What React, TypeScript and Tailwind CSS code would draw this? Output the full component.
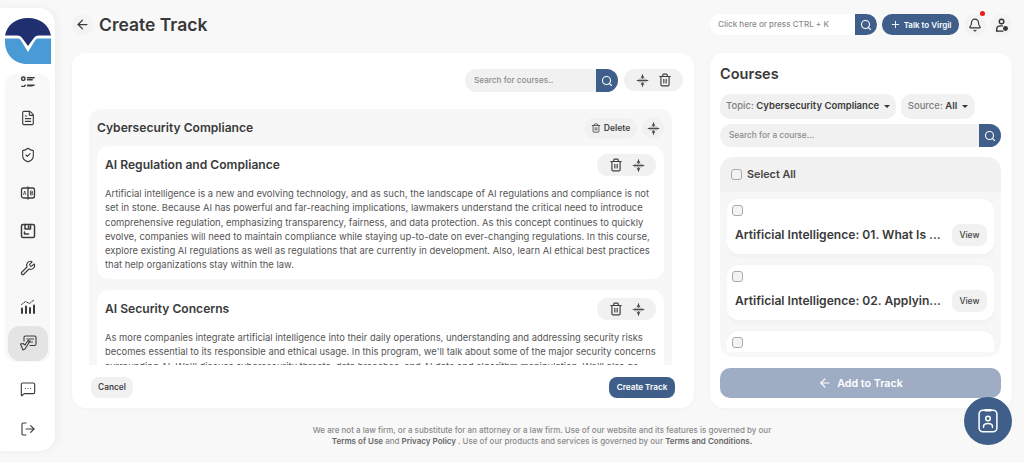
import React from "react";
import { ArrowLeft, Search, Plus, Bell, Trash2, FileText, ShieldCheck, Wrench, MessageSquareMore, LogOut } from "lucide-react";

const Move = ({ s = 13 }: { s?: number }) => (
  <svg width={s} height={s} viewBox="0 0 16 16" fill="none" stroke="#4b4b4b" strokeWidth="1.4" strokeLinecap="round" strokeLinejoin="round">
    <rect x="2" y="5.500" width="12" height="5" rx="2.500" stroke="none" fill="#bcbcbc" />
    <path d="M1.500 8h13" />
    <path d="M8 1v4M6.600 3.600 8 5l1.400-1.400M8 15v-4M6.600 12.400 8 11l1.400 1.400" />
  </svg>
);

const Caret = () => <span className="ml-[5px] w-0 h-0 border-x-[3.5px] border-x-transparent border-t-[3.5px] border-t-[#333]" />;

const Check = () => <span className="block w-[11px] h-[11px] rounded-[3px] border border-[#aaa] bg-[#f3f3f3]" />;

const Pill = ({ flip }: { flip?: boolean }) => (
  <div className="w-[59px] h-[22px] rounded-full bg-[#f1f1f1] flex items-center justify-center gap-[9px]">
    {flip ? <><Move /><Trash2 size={14} color="#3f3f3f" /></> : <><Trash2 size={14} color="#3f3f3f" /><Move /></>}
  </div>
);

const SearchBtn = () => (
  <span className="h-full w-[22px] shrink-0 bg-[#3f5f8a] rounded-r-full flex items-center justify-center"><Search size={12} color="#fff" strokeWidth={2.2} /></span>
);

const NavIcon = ({ children, active }: { children: React.ReactNode; active?: boolean }) => (
  <div className="shrink-0 h-[37.6px] flex items-center justify-center">
    {active ? <div className="w-[40px] h-[35px] rounded-[12px] bg-[#e4e4e4] flex items-center justify-center">{children}</div> : children}
  </div>
);

const I = { size: 16, color: "#3c3c3c", strokeWidth: 1.7 };

const Item = ({ title }: { title: string }) => (
  <div className="bg-white rounded-[12px] h-[55px] px-[5px] pt-[6px] shadow-[0_2px_6px_rgba(0,0,0,0.04)] shrink-0">
    <Check />
    <div className="flex items-center justify-between mt-[8px] pl-[3px] pr-[2px]">
      <span className="pt-[1px] text-[12.1px] font-semibold text-[#3a3a3a] whitespace-nowrap">{title}</span>
      <span className="w-[35px] h-[22px] rounded-[8px] bg-[#f1f1f1] text-[8.5px] font-medium text-[#444] flex items-center justify-center">View</span>
    </div>
  </div>
);

export default function App() {
  return (
    <div className="relative w-[1024px] h-[462px] overflow-hidden bg-[#f8f8f8] flex font-['Inter',sans-serif]">
      <aside className="w-[55px] my-[8px] h-[443px] shrink-0 bg-white rounded-r-[16px] shadow-[2px_0_8px_rgba(0,0,0,0.05)] flex flex-col items-center">
        <svg className="mt-[10px] shrink-0" width="46" height="46" viewBox="0 0 46 46">
          <path d="M0 17.500C2 7 11 0 23 0s21 7 23 17.500H34c-3 0-4 1-5.500 3L23 28l-5.500-7.500c-1.500-2-2.500-3-5.500-3z" fill="#1f2f6f" />
          <path d="M0 20.500h12c2 0 3 .5 4 2l7 11.500 7-11.500c1-1.500 2-2 4-2h12V46H22C9 46 0 36 0 24z" fill="#4a9ad6" />
        </svg>
        <div className="mt-[10px] w-[45px] h-[288px] bg-[#f8f8f8] rounded-[10px] overflow-hidden flex flex-col shrink-0">
          <div className="shrink-0 h-[13px] flex items-end justify-center overflow-hidden">
            <svg width="15" height="15" viewBox="0 0 16 16" fill="none" stroke="#3c3c3c" strokeWidth="1.6" strokeLinecap="round" className="shrink-0 mb-[-3px]">
              <circle cx="3.500" cy="4" r="1.800" /><path d="M8 3h7M8 5h5M8 11h7M8 13h5M2 12l1.200 1.200L5.500 11" />
            </svg>
          </div>
          <div className="mt-[12px] flex flex-col">
            <NavIcon><FileText {...I} /></NavIcon>
            <NavIcon><ShieldCheck {...I} /></NavIcon>
            <NavIcon>
              <svg width="16" height="16" viewBox="0 0 16 16" fill="none" stroke="#3c3c3c" strokeWidth="1.3" strokeLinejoin="round"><rect x="1.500" y="3" width="13" height="10" rx="2" /><path d="M8 1.500v13" /><path d="M3.500 10l1.200-4 1.200 4M10.500 6h1.200a1 1 0 0 1 0 2h-1.200V6zm0 2h1.500a1 1 0 0 1 0 2h-1.500V8z" strokeWidth="0.8" /></svg>
            </NavIcon>
            <NavIcon>
              <svg width="16" height="16" viewBox="0 0 16 16" fill="none" stroke="#3c3c3c" strokeWidth="1.5" strokeLinejoin="round" strokeLinecap="round"><rect x="1.500" y="1.500" width="13" height="13" rx="1.500" /><path d="M5 1.500V6h5.500V1.500M8.500 3v1.500M4.500 11h4M4.500 9v2" /></svg>
            </NavIcon>
            <NavIcon><Wrench {...I} /></NavIcon>
            <NavIcon>
              <svg width="16" height="16" viewBox="0 0 16 16" fill="none" stroke="#3c3c3c" strokeLinecap="round"><path d="M2 10.500V15M6 8.500V15M10 10V15M14 7.500V15" strokeWidth="2" /><path d="M1.500 6.500l4-3 4 2 5-4" strokeWidth="1" strokeDasharray="2 1.200" /></svg>
            </NavIcon>
            <NavIcon active>
              <svg width="18" height="18" viewBox="0 0 18 18" fill="none" stroke="#3c3c3c" strokeWidth="1.100" strokeLinecap="round" strokeLinejoin="round"><path d="M5 7V3.500c0-.8.600-1.500 1.500-1.500h9c.8 0 1.500.7 1.500 1.500V10c0 .8-.7 1.500-1.500 1.500H11" /><path d="M8 5h6.500M9.500 8h4" /><path d="M1.500 10l2.500 6 2-1 5-8-2-.5L6 11 4 9.500z" /></svg>
            </NavIcon>
          </div>
        </div>
        <div className="mt-[8px] h-[37px] flex items-center"><MessageSquareMore {...I} /></div>
        <div className="mt-[3px] h-[37px] flex items-center"><LogOut {...I} /></div>
      </aside>

      <main className="ml-[17px] w-[940px] flex flex-col">
        <header className="mt-[14px] h-[21px] flex items-center">
          <button className="w-[21px] h-[21px] rounded-full bg-[#f3f3f3] flex items-center justify-center"><ArrowLeft size={15} color="#3c3c3c" strokeWidth={2} /></button>
          <h1 className="ml-[6px] text-[17.5px] font-semibold text-[#383838] leading-none">Create Track</h1>
          <div className="ml-auto w-[167px] h-[21px] bg-white rounded-full flex items-center pl-[8px]">
            <span className="flex-1 text-[8.1px] font-medium text-[#8c8c8c]">Click here or press CTRL + K</span>
            <SearchBtn />
          </div>
          <button className="ml-[5px] w-[77px] h-[21px] rounded-[10px] bg-[#3f5f8a] text-white text-[8px] font-semibold flex items-center justify-center gap-[3px]"><Plus size={11} color="#fff" strokeWidth={2} />Talk to Virgil</button>
          <div className="relative ml-[5px] w-[22px] h-[22px] rounded-full bg-[#f3f3f3] flex items-center justify-center">
            <Bell size={14} color="#333" strokeWidth={1.9} />
            <span className="absolute top-[-3px] right-[1px] w-[5px] h-[5px] rounded-full bg-[#f01818]" />
          </div>
          <div className="ml-[5px] w-[21px] h-[22px] rounded-full bg-[#f3f3f3] flex items-center justify-center">
            <svg width="14" height="14" viewBox="0 0 16 16" fill="none" stroke="#333" strokeWidth="1.6" strokeLinecap="round"><circle cx="7.500" cy="4" r="2.600" /><path d="M2 15v-2.500C2 10.500 4 9 6.500 9h2" /><path d="M2 15h7" /><circle cx="12" cy="12" r="2" fill="#333" /></svg>
          </div>
        </header>

        <div className="mt-[18px] flex gap-[16px]">
          <section className="w-[622px] h-[355px] bg-white rounded-[14px] shadow-[0_1px_4px_rgba(0,0,0,0.03)] flex flex-col">
            <div className="mt-[16px] flex justify-end pr-[11px] gap-[6px] shrink-0">
              <div className="w-[153px] h-[23px] rounded-full bg-[#f1f1f1] flex items-center pl-[9px]">
                <span className="flex-1 text-[8.2px] font-medium text-[#8c8c8c]">Search for courses..</span>
                <SearchBtn />
              </div>
              <Pill flip />
            </div>
            <div className="mt-[17px] mx-[17px] w-[583px] h-[256px] bg-[#f7f7f7] rounded-t-[12px] overflow-hidden shrink-0 px-[8px]">
              <div className="flex items-center justify-between h-[37px]">
                <h2 className="pt-[2px] text-[12.1px] font-semibold text-[#3a3a3a]">Cybersecurity Compliance</h2>
                <div className="flex items-center gap-[5px] mt-[1px]">
                  <button className="w-[53px] h-[21px] rounded-full bg-[#f1f1f1] text-[8.6px] font-semibold text-[#444] flex items-center justify-center gap-[3px]"><Trash2 size={10} color="#444" />Delete</button>
                  <div className="w-[22px] h-[22px] rounded-full bg-[#f1f1f1] flex items-center justify-center"><Move /></div>
                </div>
              </div>
              <article className="bg-white rounded-[12px] h-[133px] px-[8px] pt-[8px]">
                <div className="flex items-center justify-between h-[22px]">
                  <h3 className="pt-[1px] text-[12.1px] font-semibold text-[#3a3a3a]">AI Regulation and Compliance</h3>
                  <Pill />
                </div>
                <p className="mt-[11px] w-[548px] text-[9.45px] leading-[14.3px] text-[#555]">Artificial intelligence is a new and evolving technology, and as such, the landscape of AI regulations and compliance is not set in stone. Because AI has powerful and far-reaching implications, lawmakers understand the critical need to introduce comprehensive regulation, emphasizing transparency, fairness, and data protection. As this concept continues to quickly evolve, companies will need to maintain compliance while staying up-to-date on ever-changing regulations. In this course, explore existing AI regulations as well as regulations that are currently in development. Also, learn AI ethical best practices that help organizations stay within the law.</p>
              </article>
              <article className="mt-[11px] bg-white rounded-[12px] h-[133px] px-[8px] pt-[8px]">
                <div className="flex items-center justify-between h-[22px]">
                  <h3 className="pt-[1px] text-[12.1px] font-semibold text-[#3a3a3a]">AI Security Concerns</h3>
                  <Pill />
                </div>
                <p className="mt-[11px] w-[551px] text-[9.4px] leading-[14.3px] text-[#555]">As more companies integrate artificial intelligence into their daily operations, understanding and addressing security risks becomes essential to its responsible and ethical usage. In this program, we'll talk about some of the major security concerns surrounding AI. We'll discuss cybersecurity threats, data breaches, and AI data and algorithm manipulation. We'll also go</p>
              </article>
            </div>
            <div className="mt-[12px] flex justify-between pl-[19px] pr-[19px] shrink-0">
              <button className="w-[42px] h-[21px] rounded-[8px] bg-[#f1f1f1] text-[8.3px] font-semibold text-[#444]">Cancel</button>
              <button className="w-[66px] h-[21px] rounded-[8px] bg-[#3f5f8a] text-[8.2px] font-semibold text-white">Create Track</button>
            </div>
          </section>

          <section className="w-[302px] h-[355px] bg-white rounded-[14px] shadow-[0_1px_4px_rgba(0,0,0,0.03)] px-[10px] flex flex-col">
            <h2 className="mt-[11px] text-[14.5px] font-semibold text-[#383838] leading-[19px]">Courses</h2>
            <div className="mt-[11px] flex gap-[5px]">
              <div className="w-[176px] h-[25px] rounded-[10px] bg-[#f1f1f1] flex items-center justify-center text-[9.5px] font-semibold text-[#3a3a3a]"><span className="font-medium text-[#808080]">Topic:&nbsp;</span>Cybersecurity Compliance<Caret /></div>
              <div className="w-[74px] h-[25px] rounded-[10px] bg-[#f1f1f1] flex items-center justify-center text-[9.5px] font-semibold text-[#3a3a3a]"><span className="font-medium text-[#808080]">Source:&nbsp;</span>All<Caret /></div>
            </div>
            <div className="mt-[5px] w-[281px] h-[23px] rounded-full bg-[#f1f1f1] flex items-center pl-[9px]">
              <span className="flex-1 text-[8.3px] font-medium text-[#8c8c8c]">Search for a course...</span>
              <SearchBtn />
            </div>
            <div className="mt-[10px] w-[281px] h-[200px] rounded-[14px] bg-[#f7f7f7] overflow-hidden flex flex-col shrink-0">
              <div className="h-[35px] shrink-0 bg-[#f1f1f1] flex items-center pl-[11px] gap-[5px]">
                <Check />
                <span className="pt-[2px] text-[10.8px] font-semibold text-[#444]">Select All</span>
              </div>
              <div className="flex-1 overflow-hidden mt-[7px] mx-[7px] mb-[5px] flex flex-col gap-[11px]">
                <Item title="Artificial Intelligence: 01. What Is ..." />
                <Item title="Artificial Intelligence: 02. Applyin..." />
                <Item title="" />
              </div>
            </div>
            <button className="mt-[11px] w-[281px] h-[30px] rounded-[10px] bg-[#9eadc3] text-white text-[10.7px] font-semibold flex items-center justify-center gap-[5px]"><ArrowLeft size={14} color="#fff" strokeWidth={2} /><span className="pt-[2px]">Add to Track</span></button>
          </section>
        </div>

        <footer className="mt-[17px] text-center text-[8px] leading-[11px] text-[#8a8a8a] font-medium">
          <p>We are not a law firm, or a substitute for an attorney or a law firm. Use of our website and its features is governed by our</p>
          <p><b className="font-semibold text-[#666]">Terms of Use</b> and <b className="font-semibold text-[#666]">Privacy Policy</b> . Use of our products and services is governed by our <b className="font-semibold text-[#666]">Terms and Conditions.</b></p>
        </footer>
      </main>

      <button className="absolute left-[964px] top-[397px] w-[48px] h-[48px] rounded-full bg-[#3f5f8a] flex items-center justify-center">
        <svg width="28" height="28" viewBox="0 0 22 22" fill="none" stroke="#fff" strokeWidth="1.200" strokeLinecap="round" strokeLinejoin="round"><rect x="4" y="2.500" width="14" height="17" rx="3" /><path d="M9 2.500h4" strokeWidth="2" /><circle cx="11" cy="9" r="1.800" /><path d="M7.500 16v-.8c0-1.500 1.300-2.200 3.500-2.200s3.500.7 3.500 2.200v.8" /></svg>
      </button>
    </div>
  );
}
